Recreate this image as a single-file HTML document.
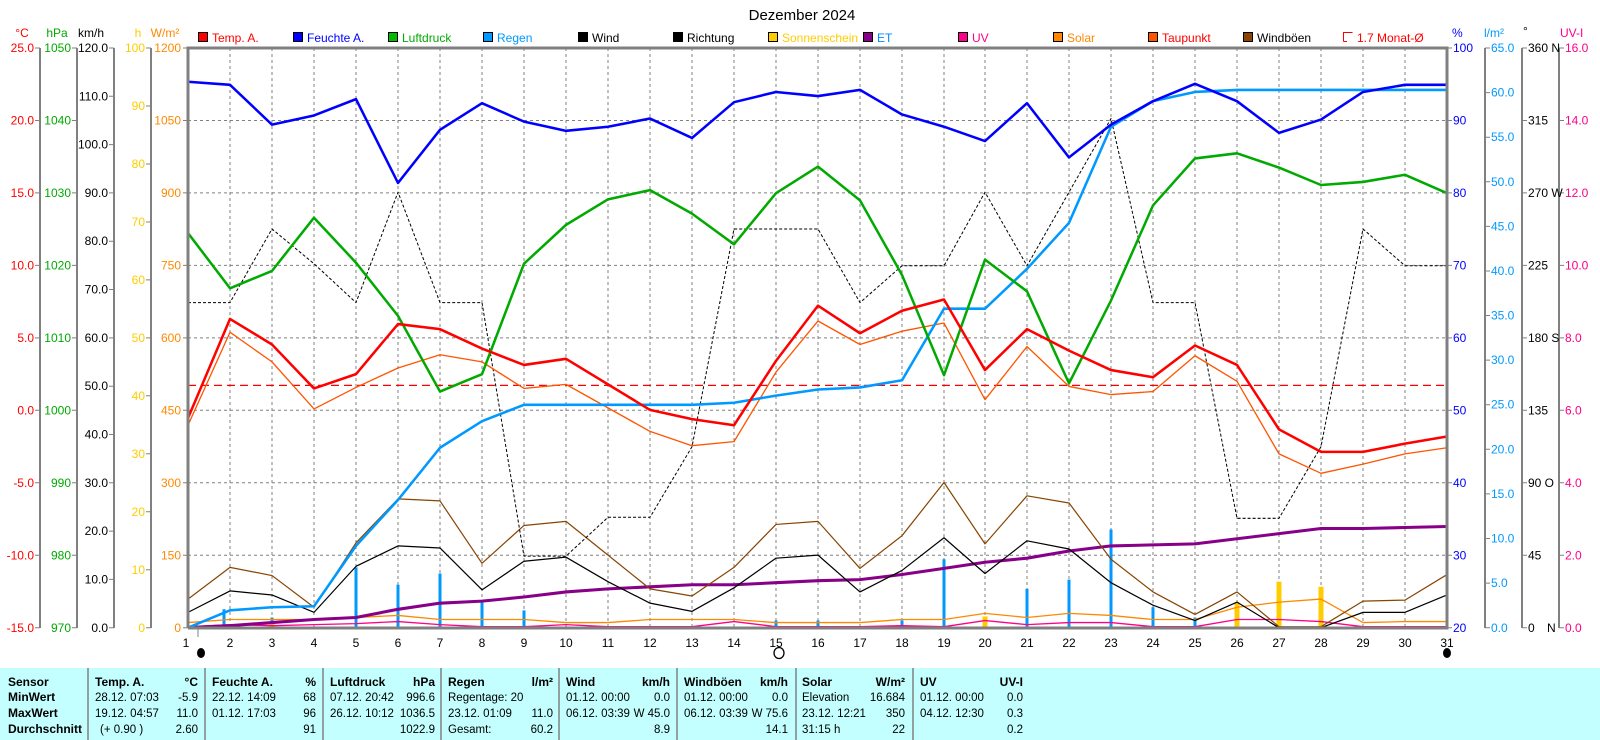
<!DOCTYPE html>
<html><head><meta charset="utf-8"><style>
body{margin:0;background:#fff;}
svg{display:block;font-family:"Liberation Sans",sans-serif;}
</style></head><body>
<svg width="1600" height="740" viewBox="0 0 1600 740" xmlns="http://www.w3.org/2000/svg">
<rect width="1600" height="740" fill="#fff"/>
<text x="802" y="20" font-size="15" text-anchor="middle">Dezember 2024</text>
<!-- unit headers -->
<g font-size="12">
<text x="22" y="37" fill="#f00" text-anchor="middle">°C</text>
<text x="57" y="37" fill="#0a0" text-anchor="middle">hPa</text>
<text x="91" y="37" fill="#000" text-anchor="middle">km/h</text>
<text x="138" y="37" fill="#fc0" text-anchor="middle">h</text>
<text x="165" y="37" fill="#f80" text-anchor="middle">W/m²</text>
<text x="1452" y="37" fill="#00f">%</text>
<text x="1484" y="37" fill="#09f">l/m²</text>
<text x="1523" y="35" fill="#000">°</text>
<text x="1560" y="37" fill="#f08">UV-I</text>
</g>
<!-- legend -->
<g font-size="12" stroke="#000" stroke-width="1">
<rect x="198.5" y="32.5" width="9" height="9" fill="#f00"/>
<rect x="293.5" y="32.5" width="9" height="9" fill="#00f"/>
<rect x="388.5" y="32.5" width="9" height="9" fill="#0b0"/>
<rect x="483.5" y="32.5" width="9" height="9" fill="#09f"/>
<rect x="578.5" y="32.5" width="9" height="9" fill="#000"/>
<rect x="673.5" y="32.5" width="9" height="9" fill="#000"/>
<rect x="768.5" y="32.5" width="9" height="9" fill="#fc0"/>
<rect x="863.5" y="32.5" width="9" height="9" fill="#808"/>
<rect x="958.5" y="32.5" width="9" height="9" fill="#f08"/>
<rect x="1053.5" y="32.5" width="9" height="9" fill="#f80"/>
<rect x="1148.5" y="32.5" width="9" height="9" fill="#f50"/>
<rect x="1243.5" y="32.5" width="9" height="9" fill="#840"/>
<path d="M1343.5 41.5V32.5H1352.5M1347 41.5H1343.5" fill="none" stroke="#f00"/>
</g>
<g font-size="12" stroke="none">
<text x="212" y="42" fill="#f00">Temp. A.</text>
<text x="307" y="42" fill="#00f">Feuchte A.</text>
<text x="402" y="42" fill="#0a0">Luftdruck</text>
<text x="497" y="42" fill="#09f">Regen</text>
<text x="592" y="42" fill="#000">Wind</text>
<text x="687" y="42" fill="#000">Richtung</text>
<text x="782" y="42" fill="#fc0">Sonnenschein</text>
<text x="877" y="42" fill="#08f">ET</text>
<text x="972" y="42" fill="#f08">UV</text>
<text x="1067" y="42" fill="#f80">Solar</text>
<text x="1162" y="42" fill="#f00">Taupunkt</text>
<text x="1257" y="42" fill="#000">Windböen</text>
<text x="1357" y="42" fill="#f00">1.7 Monat-Ø</text>
</g>
<!-- axis lines -->
<g stroke="#808080" stroke-width="2" fill="none">
<line x1="40" y1="48" x2="40" y2="628"/>
<line x1="77" y1="48" x2="77" y2="628"/>
<line x1="114" y1="48" x2="114" y2="628"/>
<line x1="151" y1="48" x2="151" y2="628"/>
<line x1="1485" y1="48" x2="1485" y2="628"/>
<line x1="1522" y1="48" x2="1522" y2="628"/>
<line x1="1559" y1="48" x2="1559" y2="628"/>
</g>
<!-- grid -->
<g stroke="#808080" stroke-width="1" stroke-dasharray="3,3" fill="none">
<path d="M188 120.5H1447M188 192.9H1447M188 265.4H1447M188 337.9H1447M188 410.3H1447M188 482.8H1447M188 555.3H1447"/>
<path d="M230 48V628M272 48V628M314 48V628M356 48V628M398 48V628M440 48V628M482 48V628M524 48V628M566 48V628M608 48V628M650 48V628M692 48V628M734 48V628M776 48V628M818 48V628M860 48V628M902 48V628M944 48V628M985 48V628M1027 48V628M1069 48V628M1111 48V628M1153 48V628M1195 48V628M1237 48V628M1279 48V628M1321 48V628M1363 48V628M1405 48V628"/>
</g>
<!-- ticks -->
<g stroke="#808080" stroke-width="1">
<path d="M35 48H40M35 120.5H40M35 192.9H40M35 265.4H40M35 337.9H40M35 410.3H40M35 482.8H40M35 555.3H40M35 627.7H40"/>
<path d="M72 48H77M72 120.5H77M72 192.9H77M72 265.4H77M72 337.9H77M72 410.3H77M72 482.8H77M72 555.3H77M72 627.7H77"/>
<path d="M109 48H114M109 96.3H114M109 144.6H114M109 192.9H114M109 241.2H114M109 289.5H114M109 337.9H114M109 386.2H114M109 434.5H114M109 482.8H114M109 531.1H114M109 579.4H114M109 627.7H114"/>
<path d="M146 48H151M146 106H151M146 164H151M146 222H151M146 279.9H151M146 337.9H151M146 395.8H151M146 453.8H151M146 511.8H151M146 569.7H151M146 627.7H151"/>
<path d="M183 48H188M183 120.5H188M183 192.9H188M183 265.4H188M183 337.9H188M183 410.3H188M183 482.8H188M183 555.3H188M183 627.7H188"/>
<path d="M1447 48H1452M1447 120.5H1452M1447 192.9H1452M1447 265.4H1452M1447 337.9H1452M1447 410.3H1452M1447 482.8H1452M1447 555.3H1452M1447 627.7H1452"/>
<path d="M1485 48H1490M1485 92.6H1490M1485 137.2H1490M1485 181.8H1490M1485 226.4H1490M1485 271H1490M1485 315.5H1490M1485 360.1H1490M1485 404.7H1490M1485 449.3H1490M1485 493.9H1490M1485 538.5H1490M1485 583.1H1490M1485 627.7H1490"/>
<path d="M1522 48H1527M1522 120.5H1527M1522 192.9H1527M1522 265.4H1527M1522 337.9H1527M1522 410.3H1527M1522 482.8H1527M1522 555.3H1527M1522 627.7H1527"/>
<path d="M1559 48H1564M1559 120.5H1564M1559 192.9H1564M1559 265.4H1564M1559 337.9H1564M1559 410.3H1564M1559 482.8H1564M1559 555.3H1564M1559 627.7H1564"/>
<path d="M198 628V637"/>
</g>
<!-- axis labels -->
<g font-size="12" text-anchor="end">
<g fill="#f00"><text x="34" y="52">25.0</text><text x="34" y="124.5">20.0</text><text x="34" y="197">15.0</text><text x="34" y="269.5">10.0</text><text x="34" y="342">5.0</text><text x="34" y="414.5">0.0</text><text x="34" y="487">-5.0</text><text x="34" y="559.5">-10.0</text><text x="34" y="632">-15.0</text></g>
<g fill="#0a0"><text x="71" y="52">1050</text><text x="71" y="124.5">1040</text><text x="71" y="197">1030</text><text x="71" y="269.5">1020</text><text x="71" y="342">1010</text><text x="71" y="414.5">1000</text><text x="71" y="487">990</text><text x="71" y="559.5">980</text><text x="71" y="632">970</text></g>
<g fill="#000"><text x="108" y="52">120.0</text><text x="108" y="100.3">110.0</text><text x="108" y="148.6">100.0</text><text x="108" y="197">90.0</text><text x="108" y="245.2">80.0</text><text x="108" y="293.5">70.0</text><text x="108" y="342">60.0</text><text x="108" y="390.2">50.0</text><text x="108" y="438.5">40.0</text><text x="108" y="487">30.0</text><text x="108" y="535">20.0</text><text x="108" y="583.4">10.0</text><text x="108" y="632">0.0</text></g>
<g fill="#fc0"><text x="145" y="52">100</text><text x="145" y="110">90</text><text x="145" y="168">80</text><text x="145" y="226">70</text><text x="145" y="284">60</text><text x="145" y="342">50</text><text x="145" y="400">40</text><text x="145" y="458">30</text><text x="145" y="516">20</text><text x="145" y="574">10</text><text x="145" y="632">0</text></g>
<g fill="#f80"><text x="181" y="52">1200</text><text x="181" y="124.5">1050</text><text x="181" y="197">900</text><text x="181" y="269.5">750</text><text x="181" y="342">600</text><text x="181" y="414.5">450</text><text x="181" y="487">300</text><text x="181" y="559.5">150</text><text x="181" y="632">0</text></g>
</g>
<g font-size="12">
<g fill="#00f"><text x="1453" y="52">100</text><text x="1453" y="124.5">90</text><text x="1453" y="197">80</text><text x="1453" y="269.5">70</text><text x="1453" y="342">60</text><text x="1453" y="414.5">50</text><text x="1453" y="487">40</text><text x="1453" y="559.5">30</text><text x="1453" y="632">20</text></g>
<g fill="#09f"><text x="1491" y="52">65.0</text><text x="1491" y="96.6">60.0</text><text x="1491" y="141.2">55.0</text><text x="1491" y="185.8">50.0</text><text x="1491" y="230.4">45.0</text><text x="1491" y="275">40.0</text><text x="1491" y="319.5">35.0</text><text x="1491" y="364">30.0</text><text x="1491" y="408.7">25.0</text><text x="1491" y="453.3">20.0</text><text x="1491" y="497.9">15.0</text><text x="1491" y="542.5">10.0</text><text x="1491" y="587">5.0</text><text x="1491" y="632">0.0</text></g>
<g fill="#000"><text x="1528" y="52">360 N</text><text x="1528" y="124.5">315</text><text x="1528" y="197">270 W</text><text x="1528" y="269.5">225</text><text x="1528" y="342">180 S</text><text x="1528" y="414.5">135</text><text x="1528" y="487">90 O</text><text x="1528" y="559.5">45</text><text x="1528" y="632">0</text><text x="1547" y="632">N</text></g>
<g fill="#f08"><text x="1565" y="52">16.0</text><text x="1565" y="124.5">14.0</text><text x="1565" y="197">12.0</text><text x="1565" y="269.5">10.0</text><text x="1565" y="342">8.0</text><text x="1565" y="414.5">6.0</text><text x="1565" y="487">4.0</text><text x="1565" y="559.5">2.0</text><text x="1565" y="632">0.0</text></g>
</g>
<!-- day labels -->
<g font-size="12" text-anchor="middle" fill="#000">
<text x="186" y="647">1</text><text x="230" y="647">2</text><text x="272" y="647">3</text><text x="314" y="647">4</text><text x="356" y="647">5</text><text x="398" y="647">6</text><text x="440" y="647">7</text><text x="482" y="647">8</text><text x="524" y="647">9</text><text x="566" y="647">10</text><text x="608" y="647">11</text><text x="650" y="647">12</text><text x="692" y="647">13</text><text x="734" y="647">14</text><text x="776" y="647">15</text><text x="818" y="647">16</text><text x="860" y="647">17</text><text x="902" y="647">18</text><text x="944" y="647">19</text><text x="985" y="647">20</text><text x="1027" y="647">21</text><text x="1069" y="647">22</text><text x="1111" y="647">23</text><text x="1153" y="647">24</text><text x="1195" y="647">25</text><text x="1237" y="647">26</text><text x="1279" y="647">27</text><text x="1321" y="647">28</text><text x="1363" y="647">29</text><text x="1405" y="647">30</text><text x="1447" y="647">31</text>
</g>
<ellipse cx="201" cy="653" rx="4" ry="5" fill="#000"/>
<ellipse cx="779" cy="653" rx="5" ry="5.5" fill="none" stroke="#000" stroke-width="1.3"/>
<ellipse cx="1447" cy="653" rx="4" ry="5" fill="#000"/>
<!-- data -->
<g transform="translate(0,-1.075) scale(1,1.0224)" fill="none" stroke-linejoin="round">
<g stroke-width="3">
<path d="M224 615V597M272 615V605M356 615V556M398 615V573M440 615V562M482 615V588M524 615V598M776 615V608M818 615V608M902 615V608M944 615V548M1027 615V577M1069 615V568M1111 615V519M1153 615V595M1195 615V605M1237 615V600" stroke="#09f"/>
</g>
<path d="M1237 615V590M1279 615V570M1321 615V575M985 615V604M272 615V610" stroke="#fc0" stroke-width="5"/>
<polyline stroke="#f08" stroke-width="1.3" points="188,614 230,612 272,613 314,612 356,611 398,609 440,612 482,614 524,614 566,612 608,614 650,614 692,614 734,609 776,614 818,614 860,614 902,613 944,614 985,608 1027,612 1069,610 1111,610 1153,614 1195,614 1237,607 1279,607 1321,609 1363,614 1405,614 1447,614"/>
<polyline stroke="#f80" stroke-width="1.3" points="188,610 230,607 272,607 314,607 356,605 398,603 440,607 482,607 524,607 566,610 608,610 650,607 692,607 734,607 776,610 818,610 860,610 902,607 944,607 985,601 1027,605 1069,601 1111,603 1153,607 1195,607 1237,595 1279,590 1321,587 1363,610 1405,609 1447,609"/>
<polyline stroke="#808" stroke-width="3" points="188,615 230,613 272,610 314,607 356,605 398,597 440,591 482,589 524,585 566,580 608,577 650,575 692,573 734,573 776,571 818,569 860,568 902,563 944,557 985,551 1027,547 1069,540 1111,535 1153,534 1195,533 1237,528 1279,523 1321,518 1363,518 1405,517 1447,516"/>
<polyline stroke="#840" stroke-width="1.2" points="188,587 230,556 272,564 314,595 356,532 398,489 440,491 482,552 524,515 566,511 608,544 650,577 692,584 734,556 776,514 818,511 860,557 902,525 944,473 985,533 1027,486 1069,493 1111,548 1153,580 1195,602 1237,580 1279,614 1321,614 1363,589 1405,588 1447,563"/>
<polyline stroke="#000" stroke-width="1.2" points="188,600 230,579 272,583 314,600 356,555 398,535 440,537 482,578 524,550 566,546 608,570 650,591 692,599 734,576 776,547 818,544 860,580 902,559 944,527 985,562 1027,530 1069,538 1111,571 1153,593 1195,608 1237,590 1279,615 1321,615 1363,600 1405,600 1447,583"/>
<polyline stroke="#000" stroke-width="1" stroke-dasharray="3,2" points="188,297 230,297 272,225 314,259 356,297 398,189 440,297 482,297 524,545 566,545 608,507 650,507 692,438 734,225 776,225 818,225 860,297 902,261 944,261 985,189 1027,261 1069,189 1111,117 1153,297 1195,297 1237,508 1279,508 1321,438 1363,225 1405,261 1447,261"/>
<line x1="188" y1="378" x2="1447" y2="378" stroke="#f00" stroke-width="1.3" stroke-dasharray="8,5"/>
<polyline stroke="#f50" stroke-width="1.3" points="188,417 230,326 272,355 314,401 356,380 398,361 440,348 482,355 524,381 566,377 608,400 650,423 692,437 734,433 776,365 818,315 860,338 902,325 944,317 985,392 1027,340 1069,379 1111,387 1153,384 1195,349 1237,374 1279,445 1321,464 1363,455 1405,445 1447,439"/>
<polyline stroke="#09f" stroke-width="2.5" points="188,615 230,598 272,595 314,594 356,535 398,490 440,439 482,413 524,397 566,397 608,397 650,397 692,397 734,395 776,388 818,382 860,380 902,373 944,303 985,303 1027,264 1069,219 1111,125 1153,100 1195,91 1237,89 1279,89 1321,89 1363,89 1405,89 1447,89"/>
<polyline stroke="#0a0" stroke-width="2.5" points="188,229 230,283 272,266 314,214 356,258 398,310 440,384 482,367 524,259 566,221 608,196 650,187 692,210 734,240 776,190 818,164 860,197 902,270 944,368 985,255 1027,286 1069,376 1111,295 1153,202 1195,156 1237,151 1279,165 1321,182 1363,179 1405,172 1447,190"/>
<polyline stroke="#f00" stroke-width="2.5" points="188,410 230,313 272,338 314,381 356,367 398,318 440,323 482,342 524,358 566,352 608,377 650,402 692,411 734,417 776,354 818,300 860,327 902,305 944,294 985,363 1027,323 1069,344 1111,363 1153,370 1195,339 1237,358 1279,421 1321,443 1363,443 1405,435 1447,428"/>
<polyline stroke="#00f" stroke-width="2.5" points="188,81 230,84 272,123 314,114 356,98 398,180 440,128 482,102 524,120 566,129 608,125 650,117 692,136 734,101 776,91 818,95 860,89 902,113 944,125 985,139 1027,102 1069,155 1111,123 1153,100 1195,83 1237,100 1279,131 1321,118 1363,91 1405,84 1447,84"/>
</g>
<!-- plot border -->
<path d="M188 628V48H1447V628H188" fill="none" stroke="#808080" stroke-width="3"/>
<!-- table -->
<rect x="0" y="668" width="1600" height="72" fill="#c4ffff"/>
<g stroke="#808080" stroke-width="1.5">
<path d="M88 668V740M205 668V740M323 668V740M441 668V740M559 668V740M677 668V740M796 668V740M913 668V740"/>
</g>
<g font-size="12" fill="#000">
<g font-weight="bold"><text x="8" y="686">Sensor</text><text x="8" y="701">MinWert</text><text x="8" y="717">MaxWert</text><text x="8" y="733">Durchschnitt</text>
<text x="95" y="686">Temp. A.</text><text x="212" y="686">Feuchte A.</text><text x="330" y="686">Luftdruck</text><text x="448" y="686">Regen</text><text x="566" y="686">Wind</text><text x="684" y="686">Windböen</text><text x="802" y="686">Solar</text><text x="920" y="686">UV</text>
<g text-anchor="end"><text x="198" y="686">°C</text><text x="316" y="686">%</text><text x="435" y="686">hPa</text><text x="553" y="686">l/m²</text><text x="670" y="686">km/h</text><text x="788" y="686">km/h</text><text x="905" y="686">W/m²</text><text x="1023" y="686">UV-I</text></g></g>
<g font-size="11.5">
<text x="95" y="701">28.12.  07:03</text><text x="95" y="717">19.12.  04:57</text><text x="100" y="733">(+ 0.90 )</text>
<text x="212" y="701">22.12.  14:09</text><text x="212" y="717">01.12.  17:03</text>
<text x="330" y="701">07.12.  20:42</text><text x="330" y="717">26.12.  10:12</text>
<text x="448" y="701">Regentage: 20</text><text x="448" y="717">23.12.  01:09</text><text x="448" y="733">Gesamt:</text>
<text x="566" y="701">01.12.  00:00</text><text x="566" y="717">06.12.  03:39</text>
<text x="684" y="701">01.12.  00:00</text><text x="684" y="717">06.12.  03:39</text>
<text x="802" y="701">Elevation</text><text x="802" y="717">23.12.  12:21</text><text x="802" y="733">31:15 h</text>
<text x="920" y="701">01.12.  00:00</text><text x="920" y="717">04.12.  12:30</text>
<g text-anchor="end">
<text x="198" y="701">-5.9</text><text x="198" y="717">11.0</text><text x="198" y="733">2.60</text>
<text x="316" y="701">68</text><text x="316" y="717">96</text><text x="316" y="733">91</text>
<text x="435" y="701">996.6</text><text x="435" y="717">1036.5</text><text x="435" y="733">1022.9</text>
<text x="553" y="717">11.0</text><text x="553" y="733">60.2</text>
<text x="670" y="701">0.0</text><text x="670" y="717">W 45.0</text><text x="670" y="733">8.9</text>
<text x="788" y="701">0.0</text><text x="788" y="717">W 75.6</text><text x="788" y="733">14.1</text>
<text x="905" y="701">16.684</text><text x="905" y="717">350</text><text x="905" y="733">22</text>
<text x="1023" y="701">0.0</text><text x="1023" y="717">0.3</text><text x="1023" y="733">0.2</text>
</g></g></g>
</svg>
</body></html>
